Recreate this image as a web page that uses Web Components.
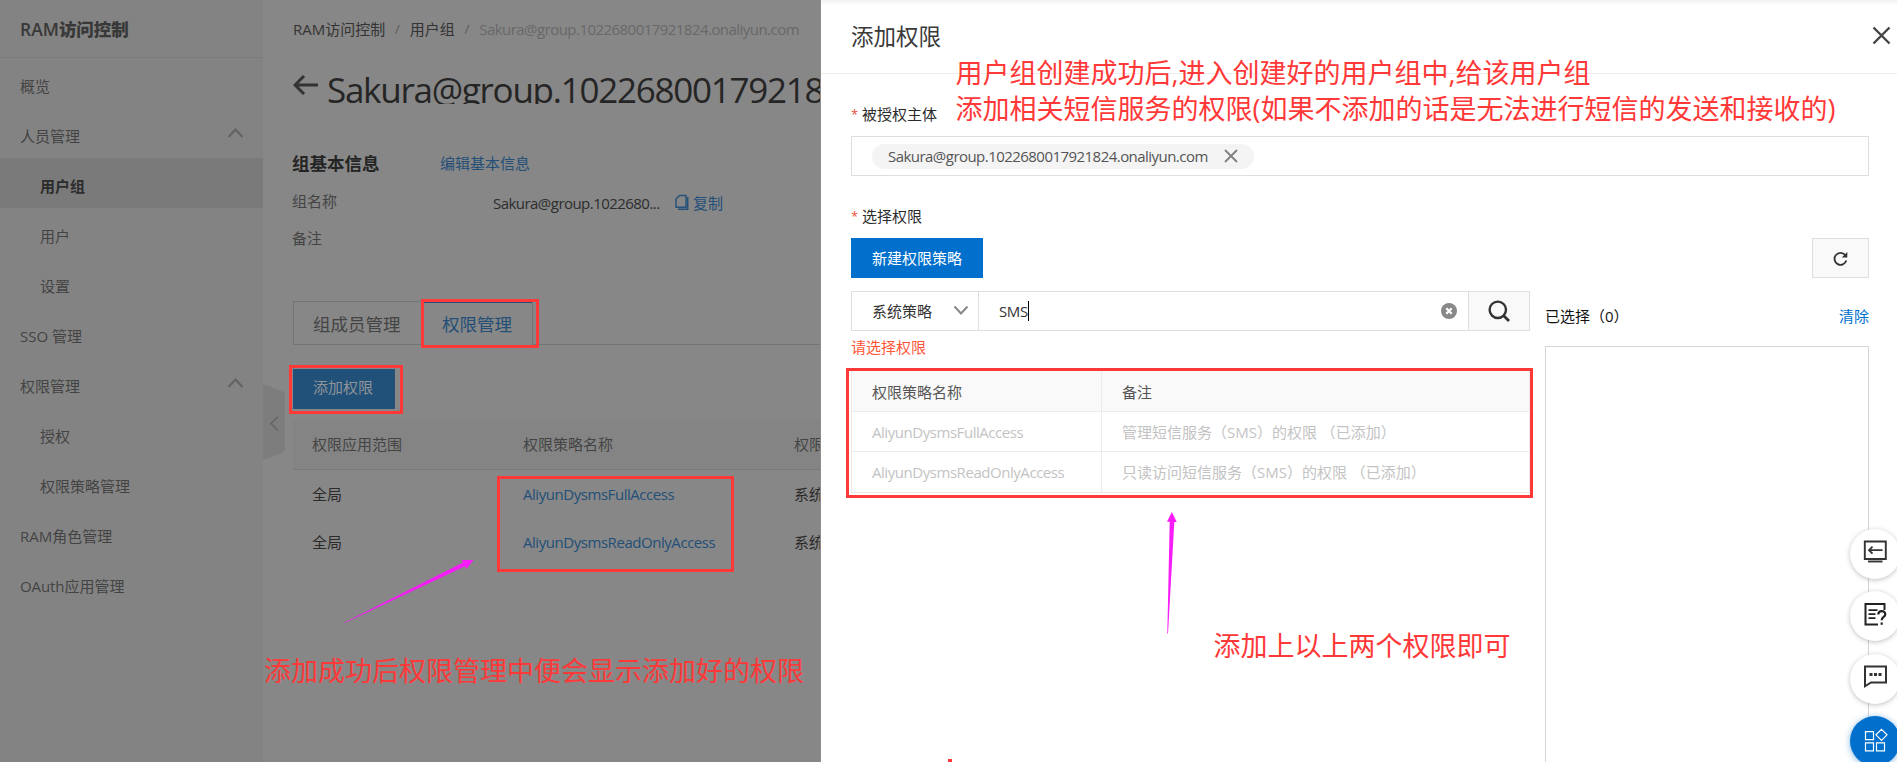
<!DOCTYPE html>
<html lang="zh-CN">
<head>
<meta charset="utf-8">
<title>RAM访问控制</title>
<style>
  html, body {
    margin: 0;
    width: 1897px;
    height: 762px;
    overflow: hidden;
    background: #878787;
  }
  body {
    font-family: "Open Sans", "Noto Sans CJK SC", sans-serif;
    font-size: 15px;
    line-height: 20px;
    color: #333;
  }
</style>
</head>
<body>
<ram-console></ram-console>

<script>
const base = `
  * { box-sizing: border-box; }
  :host { box-sizing: border-box; }
  .l { letter-spacing: -0.036em; }
  .p { letter-spacing: -0.03em; }
  svg { display: block; fill: none; flex: none; }
`;

class BaseElement extends HTMLElement {
  connectedCallback() {
    if (this.shadowRoot) return;
    this.attachShadow({ mode: "open" });
    this.shadowRoot.innerHTML = `<style>${base}${this.styles()}</style>${this.markup()}`;
  }
  styles() { return ""; }
  markup() { return "<slot></slot>"; }
}

/* ---------- side navigation ---------- */

class NavItem extends BaseElement {
  styles() {
    return `
      :host { display: flex; justify-content: space-between; height: 50px; padding: 7px 19px 0 20px; line-height: 43px; color: #434343; }
      :host([sub]) { padding-left: 40px; }
      :host([active]) { background: #7a7a7a; color: #2c2c2c; font-weight: 600; }
      svg { margin-top: 12px; }
    `;
  }
  markup() {
    const arrow = `<svg width="17" height="12" viewBox="0 0 17 12"><path d="M1.5 10 8.5 2.5 15.5 10" stroke="#626262" stroke-width="2"/></svg>`;
    return `<span><slot></slot></span>${this.hasAttribute("open") ? arrow : ""}`;
  }
}

class SideNav extends BaseElement {
  styles() {
    return `
      :host { display: block; width: 263px; height: 762px; background: #838383; flex: none; }
      h1 { margin: 0; height: 58px; padding: 2px 0 0 20px; line-height: 55px; font-size: 17.5px; font-weight: 600; color: #383838; border-bottom: 1px solid #7b7b7b; }
    `;
  }
  markup() {
    return `
      <h1>RAM<b>访问控制</b></h1>
      <nav-item>概览</nav-item>
      <nav-item open>人员管理</nav-item>
      <nav-item sub active>用户组</nav-item>
      <nav-item sub>用户</nav-item>
      <nav-item sub>设置</nav-item>
      <nav-item>SSO 管理</nav-item>
      <nav-item open>权限管理</nav-item>
      <nav-item sub>授权</nav-item>
      <nav-item sub>权限策略管理</nav-item>
      <nav-item>RAM角色管理</nav-item>
      <nav-item><span style="letter-spacing:-0.1px">OAuth</span>应用管理</nav-item>
    `;
  }
}

/* ---------- group page ---------- */

class BreadCrumb extends BaseElement {
  styles() {
    return `
      :host { display: flex; height: 60px; line-height: 59px; color: #333; white-space: nowrap; }
      i { width: 24.5px; text-align: center; font-style: normal; font-size: 13px; color: #5b5b5b; }
      .last { color: #686868; }
    `;
  }
  markup() {
    return `<span>RAM访问控制</span><i>/</i><span>用户组</span><i>/</i><span class="last l">Sakura@group.1022680017921824.onaliyun.com</span>`;
  }
}

class GroupTitle extends BaseElement {
  styles() {
    return `
      :host { display: flex; height: 44px; overflow: hidden; font-size: 35px; line-height: 59px; color: #252525; white-space: nowrap; }
      svg { margin: 14px 8px 0 -1px; }
    `;
  }
  markup() {
    return `
      <svg width="27" height="22" viewBox="0 0 27 22"><path d="M12 2 3 11l9 9M3 11h23" stroke="#333" stroke-width="3"/></svg>
      <span class="l">Sakura@group.1022680017921824.onaliyun.com</span>
    `;
  }
}

class GroupInfo extends BaseElement {
  styles() {
    return `
      :host { display: block; padding-top: 45px; color: #444; }
      .head { display: flex; height: 28px; line-height: 28px; margin-bottom: 6px; }
      h2 { margin: 0 0 0 -1px; width: 148px; font-size: 17.5px; font-weight: 700; color: #242424; }
      .row { display: flex; height: 37px; line-height: 37px; }
      .row > span:first-child { margin-left: -1px; width: 201px; }
      .value { width: 181px; padding-top: 2px; color: #2d2d2d; }
      a { color: #234f78; }
      .copy { display: flex; padding-top: 2px; gap: 4px; }
      .copy svg { margin-top: 9px; }
    `;
  }
  markup() {
    return `
      <div class="head"><h2>组基本信息</h2><a>编辑基本信息</a></div>
      <div class="row">
        <span>组名称</span>
        <span class="value l">Sakura@group.1022680...</span>
        <a class="copy">
          <svg width="15" height="17" viewBox="0 0 15 17"><path d="M5.5 1.5H12v11.7H2V5z" stroke="#234f78" stroke-width="1.4"/><path d="M13.7 3v12.2H4" stroke="#234f78" stroke-width="1.5"/></svg>
          <span>复制</span>
        </a>
      </div>
      <div class="row"><span>备注</span></div>
    `;
  }
}

class TabBar extends BaseElement {
  styles() {
    return `
      :host { display: flex; height: 44px; margin-top: 44px; font-size: 17.5px; line-height: 44px; color: #444; }
      .tab { width: 129px; padding-left: 19px; border: 1px solid #757575; border-right: 0; }
      .active { width: 111px; border-right: 1px solid #757575; border-top: 2px solid #234f78; border-bottom: 0; line-height: 42px; color: #234f78; }
      .rest { flex: 1; border-bottom: 1px solid #757575; }
    `;
  }
  markup() {
    return `<div class="tab">组成员管理</div><div class="tab active">权限管理</div><div class="rest"></div>`;
  }
}

class GrantTable extends BaseElement {
  styles() {
    return `
      :host { display: block; margin-top: 10px; color: #2b2b2b; }
      .row { display: grid; grid-template-columns: 211px 271px 1fr; height: 48px; line-height: 48px; padding-left: 19px; white-space: nowrap; }
      .head { height: 51px; line-height: 51px; background: #848484; border-bottom: 1px solid #797979; color: #444; }
      a { color: #234f78; }
    `;
  }
  markup() {
    const rows = ["AliyunDysmsFullAccess", "AliyunDysmsReadOnlyAccess"];
    return `
      <div class="row head"><span>权限应用范围</span><span>权限策略名称</span><span>权限策略类型</span></div>
      ${rows.map(name => `<div class="row"><span>全局</span><a class="p">${name}</a><span>系统策略</span></div>`).join("")}
    `;
  }
}

class GroupPage extends BaseElement {
  styles() {
    return `
      :host { display: block; position: relative; width: 557px; padding-left: 30px; overflow: hidden; }
      .add { width: 102px; height: 40px; margin-top: 24px; padding-left: 20px; background: #215078; color: #8f9499; line-height: 37px; }
      /* handle that folds the side navigation, hangs over the page edge */
      .fold { position: absolute; left: 0; top: 384px; }
    `;
  }
  markup() {
    return `
      <svg class="fold" width="22" height="76" viewBox="0 0 22 76"><path d="M0 0 20 7.5Q22 8.500 22 11V65Q22 67.500 20 68.500L0 76Z" fill="#7d7d7d"/><path d="M15 32.500 8 39.500 15 46.500" stroke="#656565" stroke-width="1.700"/></svg>
      <bread-crumb></bread-crumb>
      <group-title></group-title>
      <group-info></group-info>
      <tab-bar></tab-bar>
      <div class="add">添加权限</div>
      <grant-table></grant-table>
    `;
  }
}

/* ---------- drawer ---------- */

class FieldLabel extends BaseElement {
  styles() {
    return `
      :host { display: flex; height: 21px; line-height: 21px; color: #2b2b2b; margin-bottom: 11px; }
      i { width: 11px; font-style: normal; color: #f04b3a; font-size: 13px; }
    `;
  }
  markup() { return `<i>*</i><slot></slot>`; }
}

class PrincipalInput extends BaseElement {
  styles() {
    return `
      :host { display: flex; align-items: center; height: 40px; padding-left: 20px; border: 1px solid #dedede; margin-bottom: 30px; }
      .tag { display: flex; align-items: center; justify-content: space-between; width: 382px; height: 25px; padding: 0 16px; border-radius: 13px; background: #f4f4f4; color: #555; line-height: 25px; }
    `;
  }
  markup() {
    return `
      <div class="tag">
        <span class="l">Sakura@group.1022680017921824.onaliyun.com</span>
        <svg width="14" height="14" viewBox="0 0 14 14"><path d="m1 1 12 12M13 1 1 13" stroke="#808080" stroke-width="1.800"/></svg>
      </div>
    `;
  }
}

class PolicySearch extends BaseElement {
  styles() {
    return `
      :host { display: flex; height: 40px; border: 1px solid #dedede; line-height: 39px; color: #333; }
      .type { display: flex; align-items: center; justify-content: space-between; width: 127px; padding: 0 9px 0 20px; border-right: 1px solid #dedede; }
      .query { display: flex; align-items: center; flex: 1; padding: 0 11px 0 20px; }
      .query span:first-child { letter-spacing: -0.4px; }
      .caret { width: 1px; height: 20px; background: #000; margin-right: auto; }
      .go { display: flex; align-items: center; justify-content: center; width: 61px; border-left: 1px solid #dedede; background: #f9f9f9; }
    `;
  }
  markup() {
    return `
      <div class="type">系统策略<svg width="16" height="12" viewBox="0 0 16 12"><path d="m1.500 1.500 6.500 7 6.500-7" stroke="#888" stroke-width="2"/></svg></div>
      <div class="query">
        <span>SMS</span><span class="caret"></span>
        <svg width="16" height="16" viewBox="0 0 16 16"><circle cx="8" cy="8" r="8" fill="#888"/><path d="m5.300 5.300 5.400 5.400M10.700 5.300l-5.400 5.400" stroke="#fff" stroke-width="2.200"/></svg>
      </div>
      <div class="go"><svg width="22" height="22" viewBox="0 0 22 22"><circle cx="9.800" cy="9.800" r="8.200" stroke="#333" stroke-width="2.400"/><path d="m15 15 6 6" stroke="#333" stroke-width="2.800"/></svg></div>
    `;
  }
}

class PolicyTable extends BaseElement {
  styles() {
    return `
      :host { display: block; margin-top: 7px; border: 1px solid #ebebeb; border-top: 0; color: #c3c3c3; }
      .row { display: grid; grid-template-columns: 250px 1fr; height: 40px; line-height: 41px; border-bottom: 1px solid #ebebeb; }
      .row:last-child { border-bottom: 0; }
      .row > * { padding-left: 20px; white-space: pre; }
      .row > :first-child { border-right: 1px solid #ebebeb; }
      .head { height: 41px; line-height: 43px; background: #f9f9f9; color: #555; }
    `;
  }
  markup() {
    return `
      <div class="row head"><span>权限策略名称</span><span>备注</span></div>
      <div class="row"><span class="p">AliyunDysmsFullAccess</span><span>管理短信服务（SMS）的权限 （已添加）</span></div>
      <div class="row"><span class="p">AliyunDysmsReadOnlyAccess</span><span>只读访问短信服务（SMS）的权限 （已添加）</span></div>
    `;
  }
}

class SelectedBox extends BaseElement {
  styles() {
    return `
      :host { display: flex; flex-direction: column; width: 324px; }
      .head { display: flex; justify-content: space-between; height: 51px; line-height: 51px; margin-bottom: 4px; color: #111; }
      a { color: #0070cc; }
      .list { height: 440px; border: 1px solid #d6d6d6; }
    `;
  }
  markup() {
    return `<div class="head"><span>已选择（0）</span><a>清除</a></div><div class="list"></div>`;
  }
}

class GrantDrawer extends BaseElement {
  styles() {
    return `
      :host { display: block; flex: 1; height: 762px; overflow: hidden; background: #fff; border-left: 1px solid #8d8d8d; }
      header { display: flex; justify-content: space-between; height: 74px; padding: 0 6px 0 30px; line-height: 73px; border-bottom: 1px solid #ededed; font-size: 22.5px; color: #3a3a3a; background: linear-gradient(#f2f2f2, #fff 5px); }
      header svg { margin-top: 26px; }
      .body { padding: 30px 28px 0 30px; }
      .bar { display: flex; justify-content: space-between; height: 40px; margin-bottom: 13px; }
      .create { width: 132px; background: #0070cc; color: #fff; line-height: 40px; text-align: center; }
      .refresh { display: flex; align-items: center; justify-content: center; width: 57px; border: 1px solid #dedede; background: #f9f9f9; }
      .cols { display: flex; gap: 15px; }
      .left { width: 679px; }
      .error { height: 33px; line-height: 33px; color: #ff5638; }
    `;
  }
  markup() {
    return `
      <header>添加权限<svg width="19" height="19" viewBox="0 0 19 19"><path d="m1.500 1.500 16 16M17.500 1.500l-16 16" stroke="#444" stroke-width="2.400"/></svg></header>
      <div class="body">
        <field-label>被授权主体</field-label>
        <principal-input></principal-input>
        <field-label>选择权限</field-label>
        <div class="bar">
          <div class="create">新建权限策略</div>
          <div class="refresh"><svg width="15" height="15" viewBox="0 0 15 15"><path d="M12.200 4A6 6 0 1 0 13.300 9.500" stroke="#333" stroke-width="1.800"/><path d="M14.300 1v5.400H8.800z" fill="#333"/></svg></div>
        </div>
        <div class="cols">
          <div class="left">
            <policy-search></policy-search>
            <div class="error">请选择权限</div>
            <policy-table></policy-table>
          </div>
          <selected-box></selected-box>
        </div>
      </div>
    `;
  }
}

/* ---------- floating buttons ---------- */

class FloatButton extends BaseElement {
  styles() {
    return `
      :host { display: flex; justify-content: center; width: 50px; height: 50px; padding-top: 10px; border-radius: 50%; background: #fff; box-shadow: 0 1px 5px rgba(0, 0, 0, .25); }
      :host([primary]) { background: #0070cc; padding-top: 12px; box-shadow: 0 1px 6px rgba(0, 112, 204, .5); }
    `;
  }
  markup() {
    const icons = {
      screen: `<path d="M1.800 2.500h21v17.500h-21z" stroke="#333" stroke-width="1.900"/><path d="M5 22.500h14.500" stroke="#333" stroke-width="1.900"/><path d="M19.500 11.200H6M9.500 7.700 6 11.200 9.500 14.700" stroke="#333" stroke-width="1.800"/>`,
      doc: `<path d="M21.500 9V3H2.500v20.500H15" stroke="#222" stroke-width="2"/><path d="M5.500 9.200h9M5.500 13.200h7M5.500 17.200h7" stroke="#222" stroke-width="1.800"/><path d="M15.300 13.500c0-4.500 7-4.500 7-.300 0 3-3.600 2.600-3.600 6M18.700 21.500v2.300" stroke="#222" stroke-width="2.200"/>`,
      chat: `<path d="M2 2.500h21v16H8L2 22.300z" stroke="#333" stroke-width="2"/><path d="M6.500 9h3v3h-3zM11 9h3v3h-3zM15.500 9h3v3h-3z" fill="#333"/>`,
      apps: `<path d="M2.500 3.700h8v8h-8zM2.500 14.800h8v8h-8zM13.500 14.800h8v8h-8zM18.500 1.300l5.500 5.500-5.500 5.500-5.500-5.500z" stroke="#fff" stroke-width="1.200"/>`
    };
    return `<svg width="25" height="25" viewBox="0 0 25 25">${icons[this.getAttribute("icon")]}</svg>`;
  }
}

class FloatBar extends BaseElement {
  styles() {
    return `:host { position: absolute; left: 1850px; top: 528.500px; display: flex; flex-direction: column; gap: 12.500px; }`;
  }
  markup() {
    return `
      <float-button icon="screen"></float-button>
      <float-button icon="doc"></float-button>
      <float-button icon="chat"></float-button>
      <float-button icon="apps" primary></float-button>
    `;
  }
}

/* ---------- notes drawn over the page ---------- */

class NoteLayer extends BaseElement {
  styles() {
    return `
      :host { position: absolute; inset: 0; }
      svg { position: absolute; left: 0; top: 0; }
      p { position: absolute; margin: 0; font-size: 27px; line-height: 36px; color: #ff3838; white-space: nowrap; }
    `;
  }
  markup() {
    return `
      <svg width="1897" height="762" viewBox="0 0 1897 762">
        <g stroke="#ff3838" stroke-width="3">
          <path d="M422.500 300.500h115v46h-115zM290.500 366.500h111v46h-111zM498.500 477.500h234v93h-234zM847.500 369.500h684v127h-684z"/>
        </g>
        <path d="M948 759h4v3h-4z" fill="#ff3838"/>
        <g fill="#f81cf8">
          <path d="M344 622.800 463 562.500 461.500 560 473.500 560 466.500 569 465 566.300 344.500 623z"/>
          <path d="M1167.300 633.500 1169.700 521.800H1167L1171.800 512 1176.800 522H1174.300L1168 633.500z"/>
        </g>
      </svg>
      <p style="left:955.500px;top:55px">用户组创建成功后,进入创建好的用户组中,给该用户组<br>添加相关短信服务的权限(如果不添加的话是无法进行短信的发送和接收的)</p>
      <p style="left:1213.500px;top:628px">添加上以上两个权限即可</p>
      <p style="left:264px;top:653px">添加成功后权限管理中便会显示添加好的权限</p>
    `;
  }
}

class RamConsole extends BaseElement {
  styles() {
    return `:host { display: flex; position: relative; width: 1897px; height: 762px; overflow: hidden; }`;
  }
  markup() {
    return `
      <side-nav></side-nav>
      <group-page></group-page>
      <grant-drawer></grant-drawer>
      <float-bar></float-bar>
      <note-layer></note-layer>
    `;
  }
}

customElements.define("nav-item", NavItem);
customElements.define("side-nav", SideNav);
customElements.define("bread-crumb", BreadCrumb);
customElements.define("group-title", GroupTitle);
customElements.define("group-info", GroupInfo);
customElements.define("tab-bar", TabBar);
customElements.define("grant-table", GrantTable);
customElements.define("group-page", GroupPage);
customElements.define("field-label", FieldLabel);
customElements.define("principal-input", PrincipalInput);
customElements.define("policy-search", PolicySearch);
customElements.define("policy-table", PolicyTable);
customElements.define("selected-box", SelectedBox);
customElements.define("grant-drawer", GrantDrawer);
customElements.define("float-button", FloatButton);
customElements.define("float-bar", FloatBar);
customElements.define("note-layer", NoteLayer);
customElements.define("ram-console", RamConsole);
</script>
</body>
</html>
